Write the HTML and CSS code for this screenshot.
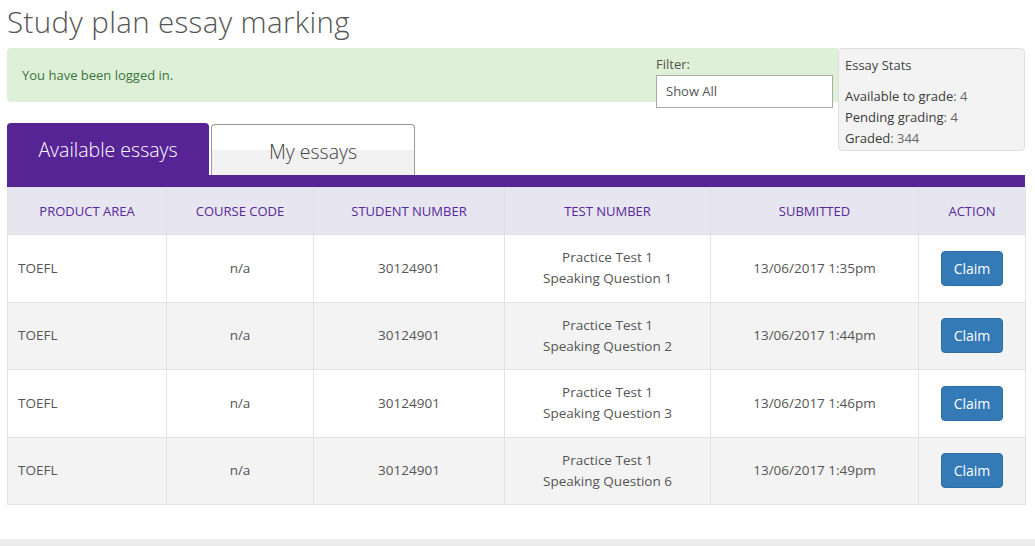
FILE: index.html
```html
<!DOCTYPE html>
<html lang="en">
<head>
<meta charset="utf-8">
<title>Study plan essay marking</title>
<link rel="stylesheet" href="styles.css">
</head>
<body>
<div class="page">
  <h1 class="title">Study plan essay marking</h1>
  <div class="top-row">
    <div class="alert">
      <span class="alert-text">You have been logged in.</span>
      <div class="filter">
        <label class="filter-label">Filter:</label>
        <div class="select">Show All</div>
      </div>
    </div>
    <div class="stats">
      <div class="stats-title">Essay Stats</div>
      <div class="stats-line"><span class="stat-key">Available to grade</span>: 4</div>
      <div class="stats-line"><span class="stat-key">Pending grading</span>: 4</div>
      <div class="stats-line"><span class="stat-key">Graded</span>: 344</div>
    </div>
  </div>
  <div class="tabs">
    <div class="tab tab-active">Available essays</div>
    <div class="tab tab-inactive">My essays</div>
  </div>
  <div class="tab-bar"></div>
  <table class="essays">
    <colgroup>
      <col class="c1"><col class="c2"><col class="c3"><col class="c4"><col class="c5"><col class="c6">
    </colgroup>
    <thead>
      <tr>
        <th>PRODUCT AREA</th><th>COURSE CODE</th><th>STUDENT NUMBER</th><th>TEST NUMBER</th><th>SUBMITTED</th><th>ACTION</th>
      </tr>
    </thead>
    <tbody>
      <tr>
        <td class="left">TOEFL</td><td>n/a</td><td>30124901</td>
        <td>Practice Test 1<br>Speaking Question 1</td><td>13/06/2017 1:35pm</td>
        <td><button class="claim">Claim</button></td>
      </tr>
      <tr>
        <td class="left">TOEFL</td><td>n/a</td><td>30124901</td>
        <td>Practice Test 1<br>Speaking Question 2</td><td>13/06/2017 1:44pm</td>
        <td><button class="claim">Claim</button></td>
      </tr>
      <tr>
        <td class="left">TOEFL</td><td>n/a</td><td>30124901</td>
        <td>Practice Test 1<br>Speaking Question 3</td><td>13/06/2017 1:46pm</td>
        <td><button class="claim">Claim</button></td>
      </tr>
      <tr>
        <td class="left">TOEFL</td><td>n/a</td><td>30124901</td>
        <td>Practice Test 1<br>Speaking Question 6</td><td>13/06/2017 1:49pm</td>
        <td><button class="claim">Claim</button></td>
      </tr>
    </tbody>
  </table>
</div>
<div class="footer"></div>
</body>
</html>
```

FILE: styles.css
```css
* { box-sizing: border-box; }
html, body { margin: 0; padding: 0; background: #fff; }
body {
  font-family: "Open Sans", "DejaVu Sans", sans-serif;
  color: #555;
  font-size: 14px;
  width: 1035px;
  height: 546px;
  overflow: hidden;
  display: flex;
  flex-direction: column;
}
.page {
  padding: 0 10px 0 7px;
  flex: 1;
}
.title {
  margin: 0 0 4px 0;
  font-size: 29.5px;
  font-weight: 300;
  line-height: 44px;
  height: 44px;
  color: #555;
  letter-spacing: 0.35px;
}
.top-row {
  display: flex;
  align-items: flex-start;
  height: 75px;
}
.alert {
  flex: 1;
  height: 54px;
  background: #dff0d8;
  border-radius: 4px 0 0 4px;
  display: flex;
  align-items: flex-start;
  justify-content: space-between;
  padding: 0 0 0 15px;
}
.alert-text {
  color: #3c763d;
  font-size: 13px;
  line-height: 54px;
}
.filter {
  width: 182px;
  padding-top: 6px;
}
.filter-label {
  display: block;
  font-size: 13px;
  line-height: 20px;
  height: 21px;
  color: #555;
}
.select {
  width: 177px;
  height: 33px;
  background: #fff;
  border: 1px solid #aaa;
  padding: 0 9px;
  line-height: 31px;
  font-size: 13px;
  color: #555;
}
.stats {
  width: 187px;
  height: 103px;
  background: #f3f3f3;
  border: 1px solid #e0e0e0;
  border-radius: 4px;
  padding: 6px 6px;
  font-size: 13px;
}
.stats-title {
  line-height: 20px;
  color: #444;
  margin-bottom: 11px;
}
.stats-line {
  line-height: 21px;
  color: #666;
}
.stat-key { color: #3a3a3a; }
.tabs {
  display: flex;
  align-items: flex-end;
  gap: 2px;
  height: 52px;
}
.tab {
  width: 202px;
  font-size: 19.5px;
  font-weight: 300;
  text-align: center;
  border-radius: 4px 4px 0 0;
}
.tab-active {
  background: #572496;
  color: #fff;
  height: 52px;
  line-height: 54px;
}
.tab-inactive {
  width: 204px;
  height: 51px;
  line-height: 53px;
  color: #444;
  border: 1px solid #999;
  border-bottom: none;
  background: linear-gradient(#fff 0, #fff 50%, #f1f1f1 50%, #f1f1f1 100%);
}
.tab-bar {
  height: 12px;
  background: #572496;
}
.essays {
  width: 100%;
  border-collapse: collapse;
  table-layout: fixed;
  border: 1px solid #e2e2e2;
}
.c1 { width: 159px; }
.c2 { width: 147px; }
.c3 { width: 191px; }
.c4 { width: 206px; }
.c5 { width: 208px; }
.c6 { width: 107px; }
.essays th {
  height: 47px;
  background: #e7e5ef;
  color: #55289b;
  font-weight: 400;
  font-size: 13px;
  text-align: center;
  border: 1px solid #e2e2e2;
  border-top: none;
  padding: 0 4px;
}
.essays td {
  height: 67.5px;
  text-align: center;
  border: 1px solid #e2e2e2;
  padding: 0 10px;
  line-height: 21px;
  font-size: 13.5px;
  color: #555;
}
.essays td.left { text-align: left; }
.essays tbody tr:nth-child(even) td { background: #f3f3f3; }
.claim {
  font-family: inherit;
  font-size: 14px;
  color: #fff;
  background: #337ab7;
  border: 1px solid #2e6da4;
  border-radius: 4px;
  width: 62px;
  height: 35px;
  padding: 0;
  cursor: pointer;
}
.footer {
  height: 7px;
  background: #ebebeb;
}
```
